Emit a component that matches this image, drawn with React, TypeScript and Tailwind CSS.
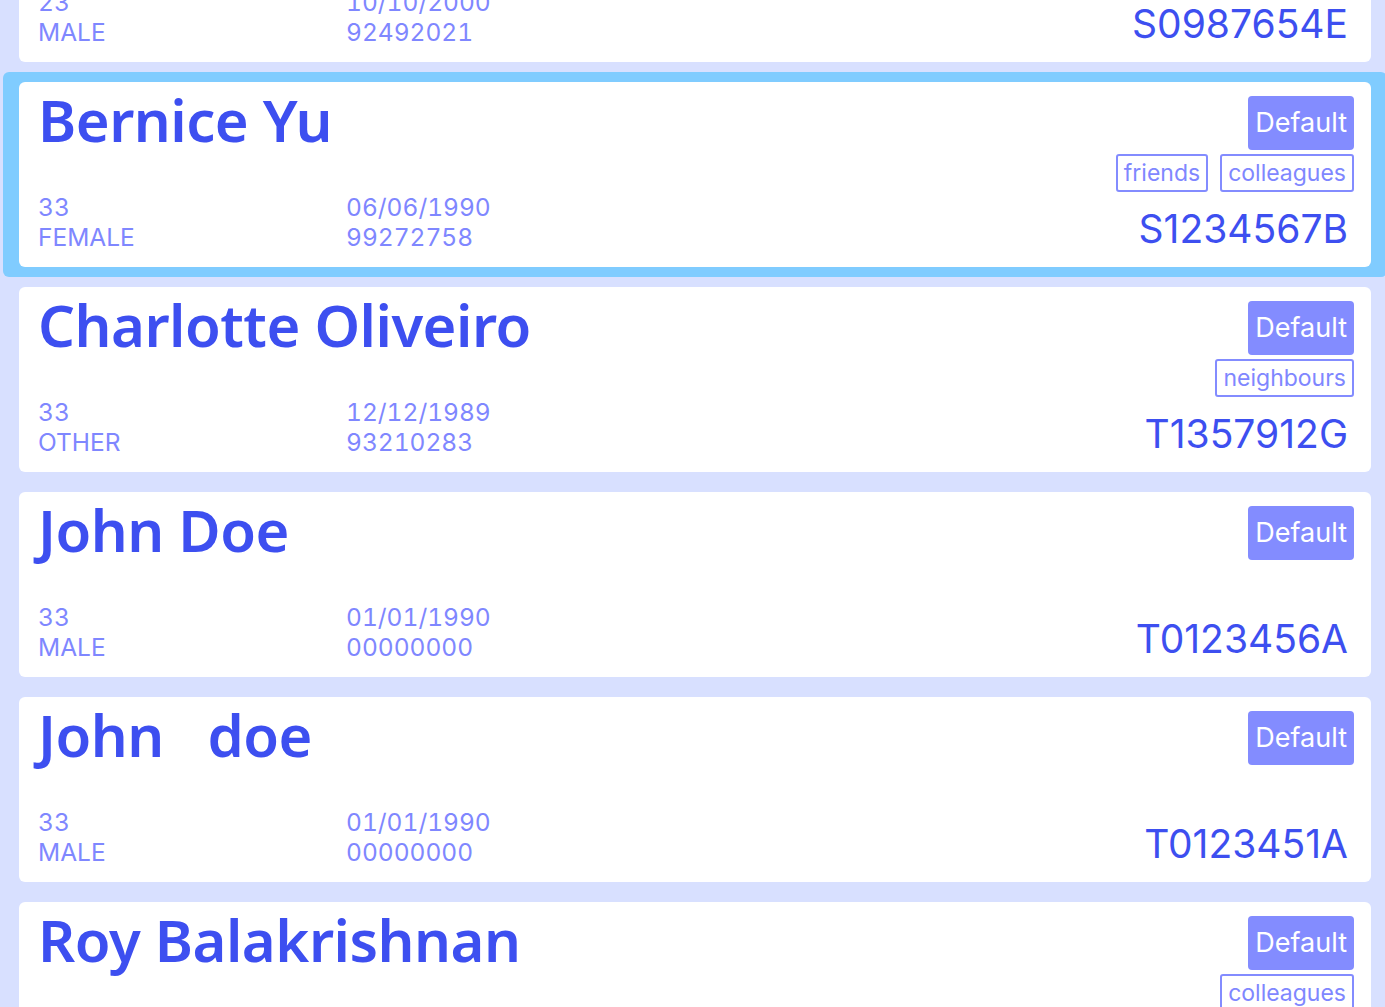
import React from 'react';

type Person = {
  name: string;
  age: string;
  gender: string;
  birthday: string;
  phone: string;
  nric: string;
  tags: string[];
};

const people: Person[] = [
  { name: 'Alex Yeoh', age: '23', gender: 'MALE', birthday: '10/10/2000', phone: '92492021', nric: 'S0987654E', tags: [] },
  { name: 'Bernice Yu', age: '33', gender: 'FEMALE', birthday: '06/06/1990', phone: '99272758', nric: 'S1234567B', tags: ['friends', 'colleagues'] },
  { name: 'Charlotte Oliveiro', age: '33', gender: 'OTHER', birthday: '12/12/1989', phone: '93210283', nric: 'T1357912G', tags: ['neighbours'] },
  { name: 'John Doe', age: '33', gender: 'MALE', birthday: '01/01/1990', phone: '00000000', nric: 'T0123456A', tags: [] },
  { name: 'John   doe', age: '33', gender: 'MALE', birthday: '01/01/1990', phone: '00000000', nric: 'T0123451A', tags: [] },
  { name: 'Roy Balakrishnan', age: '33', gender: 'MALE', birthday: '01/01/1990', phone: '00000000', nric: 'T0123452A', tags: ['colleagues'] },
];

function PersonCard({ person, selected }: { person: Person; selected: boolean }) {
  return (
    <div
      className={`w-[1384px] px-4 py-[10px] rounded-[6px] ${selected ? 'bg-[#80ccff]' : 'bg-transparent'}`}
    >
      <div className="h-[185px] bg-white rounded-[6px] flex justify-between pl-[19px] pr-[17px] pt-[14px] pb-[15px]">
        {/* Nome e detalhes */}
        <div className="flex flex-col justify-between">
          <h2 className="font-['Noto_Sans',sans-serif] font-semibold text-[58px] tracking-[-0.5px] leading-[48px] text-[#3d4ff0] whitespace-pre">
            {person.name}
          </h2>
          <div className="flex text-[24.5px] leading-[30px] text-[#7f87ff] font-['Inter',sans-serif] tabular-nums">
            <div className="w-[308px]">
              <div>{person.age}</div>
              <div>{person.gender}</div>
            </div>
            <div>
              <div>{person.birthday}</div>
              <div>{person.phone}</div>
            </div>
          </div>
        </div>

        {/* Badge, tags e NRIC */}
        <div className="flex flex-col items-end justify-between font-['Inter',sans-serif]">
          <div className="flex flex-col items-end gap-[4px]">
            <span className="bg-[#838cff] text-white text-[27px] leading-[54px] px-[7px] rounded-[4px]">
              Default
            </span>
            {person.tags.length > 0 && (
              <div className="flex gap-[12px]">
                {person.tags.map(tag => (
                  <span
                    key={tag}
                    className="border-2 border-[#838cff] rounded-[3px] text-[#7f87ff] text-[23px] leading-[34px] px-[6px]"
                  >
                    {tag}
                  </span>
                ))}
              </div>
            )}
          </div>
          <div className="text-[39px] leading-[46px] text-[#3d4ff0] pr-[6px]">{person.nric}</div>
        </div>
      </div>
    </div>
  );
}

export default function App() {
  return (
    <div className="h-[1007px] w-[1385px] overflow-hidden bg-[#d8e0ff]">
      <div className="ml-[3px] mt-[-133px] flex flex-col">
        {people.map((p, i) => (
          <PersonCard key={p.nric} person={p} selected={i === 1} />
        ))}
      </div>
    </div>
  );
}
